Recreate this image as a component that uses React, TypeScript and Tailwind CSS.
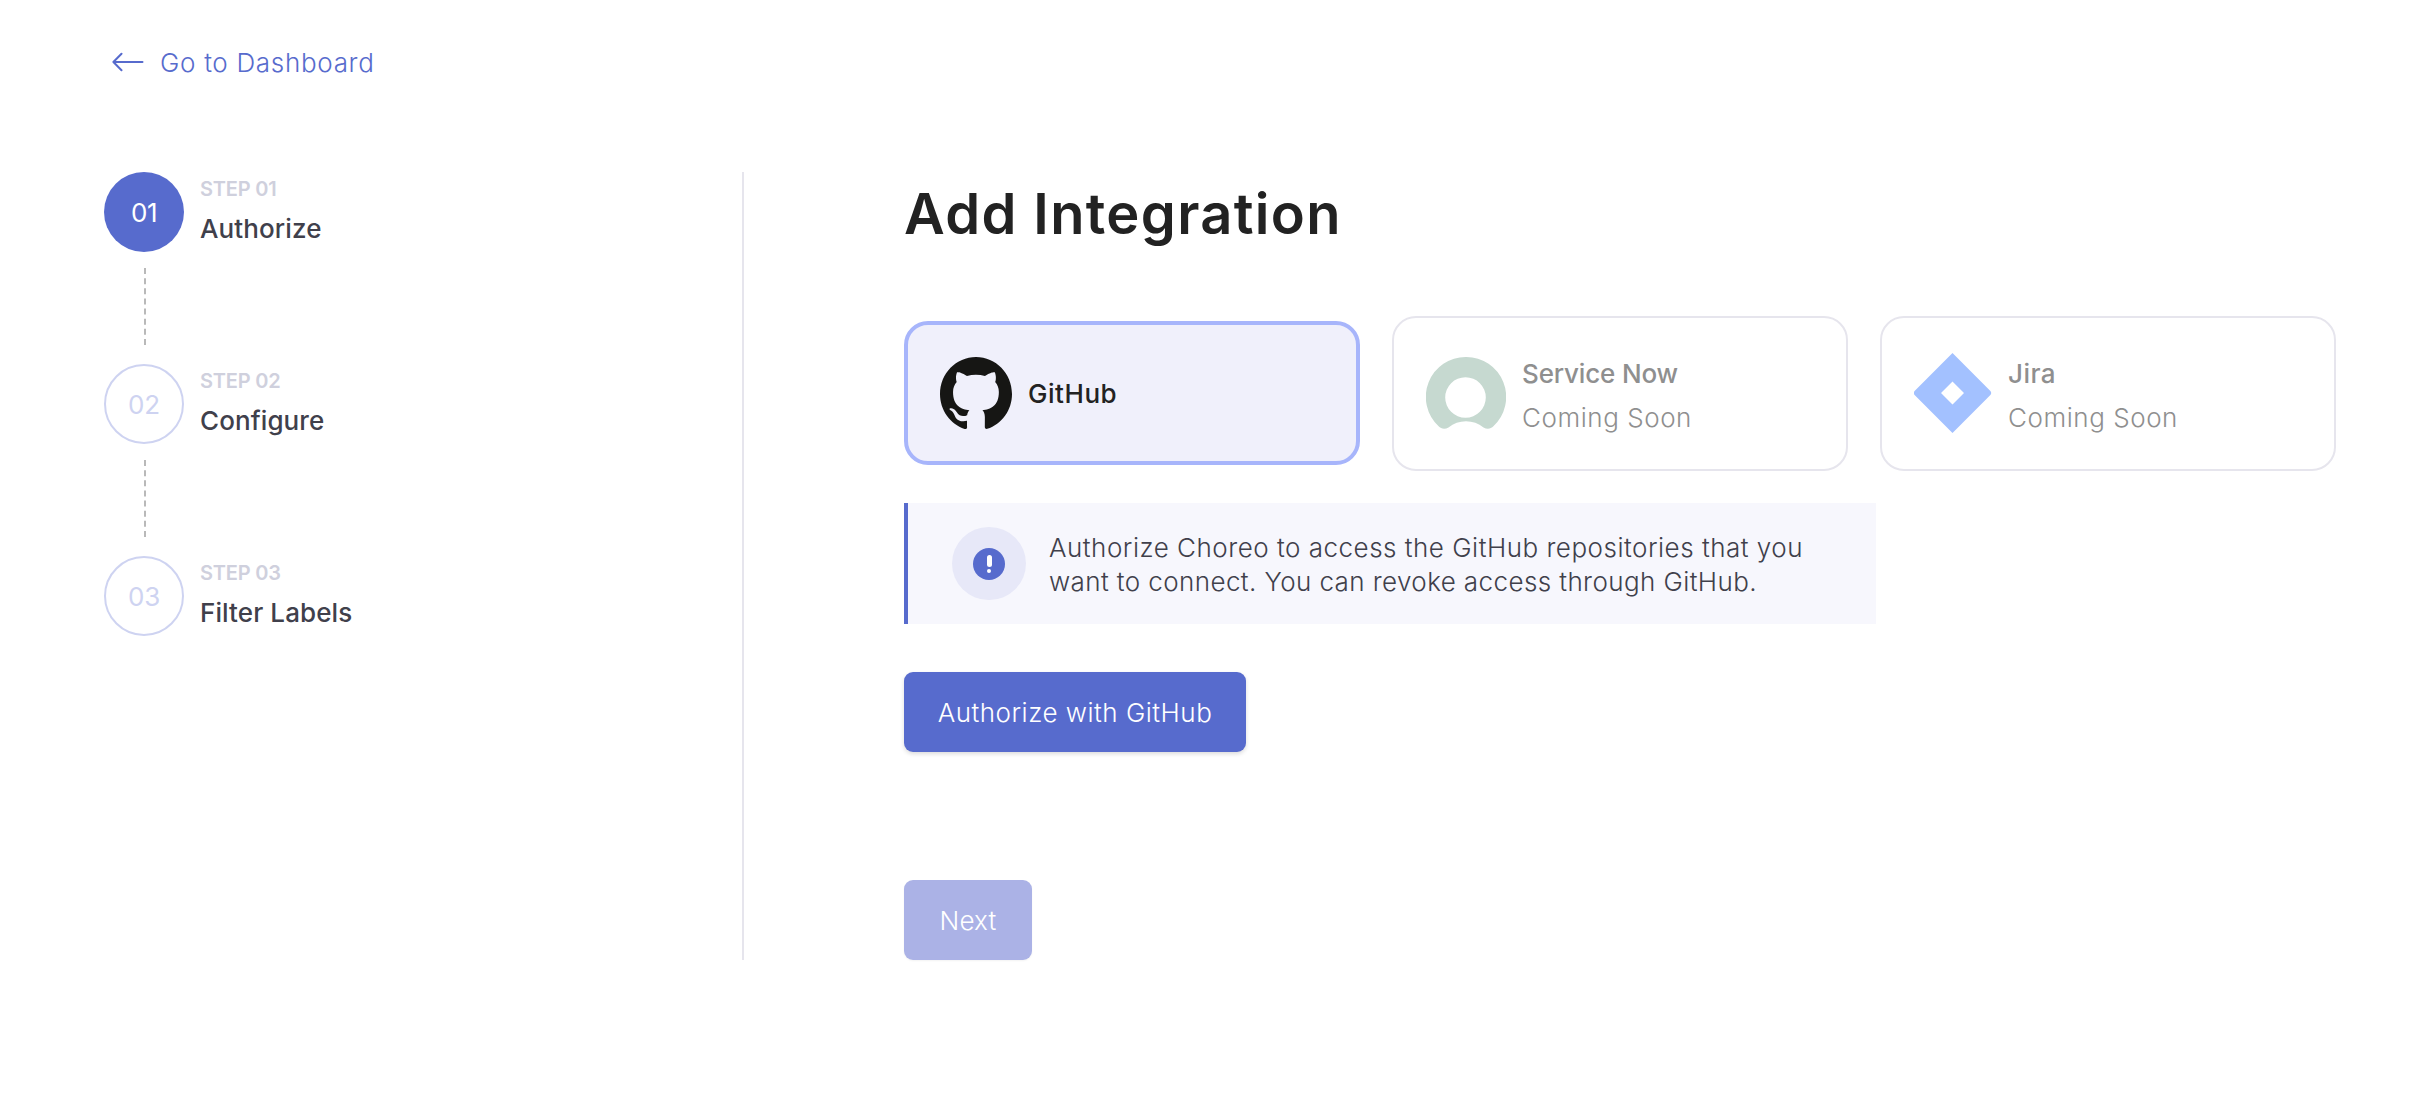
import type { ReactNode } from 'react';

function ArrowLeft() {
  return (
    <svg width="32" height="20" viewBox="0 0 32 20" fill="none" stroke="currentColor" strokeWidth="2" strokeLinecap="round" strokeLinejoin="round">
      <path d="M30.5 10H1.5M9.5 1.8L1.4 10l8.1 8.2" />
    </svg>
  );
}

function GitHubMark() {
  return (
    <svg width="72" height="72" viewBox="0 .297 24 23.41" preserveAspectRatio="none" fill="#161614">
      <path d="M12 .297c-6.63 0-12 5.373-12 12 0 5.303 3.438 9.8 8.205 11.385.6.113.82-.258.82-.577 0-.285-.01-1.04-.015-2.04-3.338.724-4.042-1.61-4.042-1.61C4.422 18.07 3.633 17.7 3.633 17.7c-1.087-.744.084-.729.084-.729 1.205.084 1.838 1.236 1.838 1.236 1.07 1.835 2.809 1.305 3.495.998.108-.776.417-1.305.76-1.605-2.665-.3-5.466-1.332-5.466-5.93 0-1.31.465-2.38 1.235-3.22-.135-.303-.54-1.523.105-3.176 0 0 1.005-.322 3.3 1.23.96-.267 1.98-.399 3-.405 1.02.006 2.04.138 3 .405 2.28-1.552 3.285-1.23 3.285-1.23.645 1.653.24 2.873.12 3.176.765.84 1.23 1.91 1.23 3.22 0 4.61-2.805 5.625-5.475 5.92.42.36.81 1.096.81 2.22 0 1.606-.015 2.896-.015 3.286 0 .315.21.69.825.57C20.565 22.092 24 17.592 24 12.297c0-6.627-5.373-12-12-12" />
    </svg>
  );
}

function ServiceNowMark() {
  return (
    <svg className="-mt-px" width="80" height="72" viewBox="0 0 80 72" fill="#c6d9d0" fillRule="evenodd">
      <path d="M40 0A40 40 0 0 0 12.6 69.3C15 72 19 72.5 22.5 70.5A28 28 0 0 1 57.5 70.5C61 72.5 65 72 67.4 69.3A40 40 0 0 0 40 0ZM39.5 20.2a20.3 20.3 0 1 1 0 40.6a20.3 20.3 0 1 1 0-40.6Z" />
    </svg>
  );
}

function JiraMark() {
  return (
    <svg className="-mt-px" width="78" height="80" viewBox="0 0 78 80" fill="#a3c1ff" fillRule="evenodd">
      <path d="M38.5 0L76.4 38Q78 40 76.4 42L38.5 80L.6 42Q-1 40 .6 38ZM38.5 28.4L27 40L38.5 51.5L50 40Z" />
    </svg>
  );
}

function Step({ num, label, title, active, numClass, labelClass }: {
  num: string; label: string; title: string; active?: boolean; numClass: string; labelClass: string;
}) {
  return (
    <div className="flex h-20 gap-4">
      <div className={`flex size-20 shrink-0 items-center justify-center rounded-full pt-px text-[26px] ${numClass} ${active ? 'bg-[#576bcd] text-white' : 'border-2 border-[#ced3f1] text-[#ced3f1]'}`}>
        {num}
      </div>
      <div className="flex flex-col gap-3 pt-[5px]">
        <span className={`text-[20px] leading-6 font-semibold text-[#cfd0dd] ${labelClass}`}>{label}</span>
        <span className="text-[26px] leading-8 font-medium tracking-[0.1px] text-[#40404b]">{title}</span>
      </div>
    </div>
  );
}

function Connector() {
  return <div className="mt-4 mb-[19px] ml-10 h-[77px] w-0 border-l-2 border-dashed border-[#b9b9b9]" />;
}

function SoonCard({ icon, name, nameClass }: { icon: ReactNode; name: string; nameClass: string }) {
  return (
    <div className="flex h-[155px] w-[456px] items-center gap-4 rounded-3xl border-2 border-[#e6e5ed] px-8">
      {icon}
      <div className="flex flex-col gap-3 pt-[5px] text-[26px] leading-8 text-[#8f8f8f]">
        <span className={`font-medium ${nameClass}`}>{name}</span>
        <span className="font-light tracking-[0.55px]">Coming Soon</span>
      </div>
    </div>
  );
}

export default function App() {
  return (
    <div className="h-[1110px] w-[2424px] overflow-hidden bg-white font-['Inter',sans-serif] whitespace-nowrap">
      <header className="flex h-[172px] items-start pt-[46px] pl-[112px] text-[#576bcd]">
        <a className="flex h-8 items-center gap-4">
          <ArrowLeft />
          <span className="pt-0.5 text-[26px] leading-8 font-light tracking-[0.69px]">Go to Dashboard</span>
        </a>
      </header>

      <div className="flex pl-[104px]">
        <aside className="h-[788px] w-[640px] border-r-2 border-[#e6e5ed]">
          <Step num="01" label="STEP 01" title="Authorize" active numClass="tracking-[-0.5px]" labelClass="tracking-[-0.2px]" />
          <Connector />
          <Step num="02" label="STEP 02" title="Configure" numClass="tracking-[-0.13px]" labelClass="tracking-[-0.2px]" />
          <Connector />
          <Step num="03" label="STEP 03" title="Filter Labels" numClass="tracking-[-0.2px]" labelClass="tracking-[-0.2px]" />
        </aside>

        <main className="flex flex-col items-start pl-[160px]">
          <h1 className="mt-[10px] text-[56px] leading-[64px] font-semibold tracking-[1.35px] text-[#222]">Add Integration</h1>

          <div className="mt-[70px] flex gap-8">
            <div className="mt-[5px] flex h-36 w-[456px] items-center gap-4 rounded-3xl border-4 border-[#a7b5fb] bg-[#f0f0fb] px-8">
              <GitHubMark />
              <span className="pt-0.5 text-[26px] leading-8 font-medium tracking-[0.55px] text-[#222]">GitHub</span>
            </div>
            <SoonCard icon={<ServiceNowMark />} name="Service Now" nameClass="tracking-[-0.16px]" />
            <SoonCard icon={<JiraMark />} name="Jira" nameClass="tracking-[0.45px]" />
          </div>

          <div className="mt-8 flex h-[121px] w-[972px] items-center gap-[23px] border-l-4 border-[#576bcd] bg-[#f7f7fd] pl-11">
            <div className="flex h-[73px] w-[74px] items-center justify-center rounded-full bg-[#e7e8f8]">
              <div className="flex size-8 flex-col items-center justify-center gap-0.5 rounded-full bg-[#576bcd]">
                <span className="h-3 w-[5px] rounded-full bg-white" />
                <span className="size-1 rounded-full bg-white" />
              </div>
            </div>
            <p className="pt-0.5 text-[26px] leading-[34px] font-light text-[#40404b]">
              <span className="tracking-[0.5px]">Authorize Choreo to access the GitHub repositories that you</span>
              <br />
              <span className="tracking-[0.4px]">want to connect. You can revoke access through GitHub.</span>
            </p>
          </div>

          <button className="mt-12 flex h-20 w-[342px] items-center justify-center rounded-[9px] bg-[#576bcd] pt-px text-[26px] font-light tracking-[0.5px] text-white shadow-[0_2px_4px_rgba(0,0,0,0.14)]">
            Authorize with GitHub
          </button>
          <button className="mt-32 flex h-20 w-32 items-center justify-center rounded-[9px] bg-[#abb2e6] pt-px text-[26px] font-light tracking-[0.2px] text-white shadow-[0_1px_2px_rgba(0,0,0,0.05)]">
            Next
          </button>
        </main>
      </div>
    </div>
  );
}
